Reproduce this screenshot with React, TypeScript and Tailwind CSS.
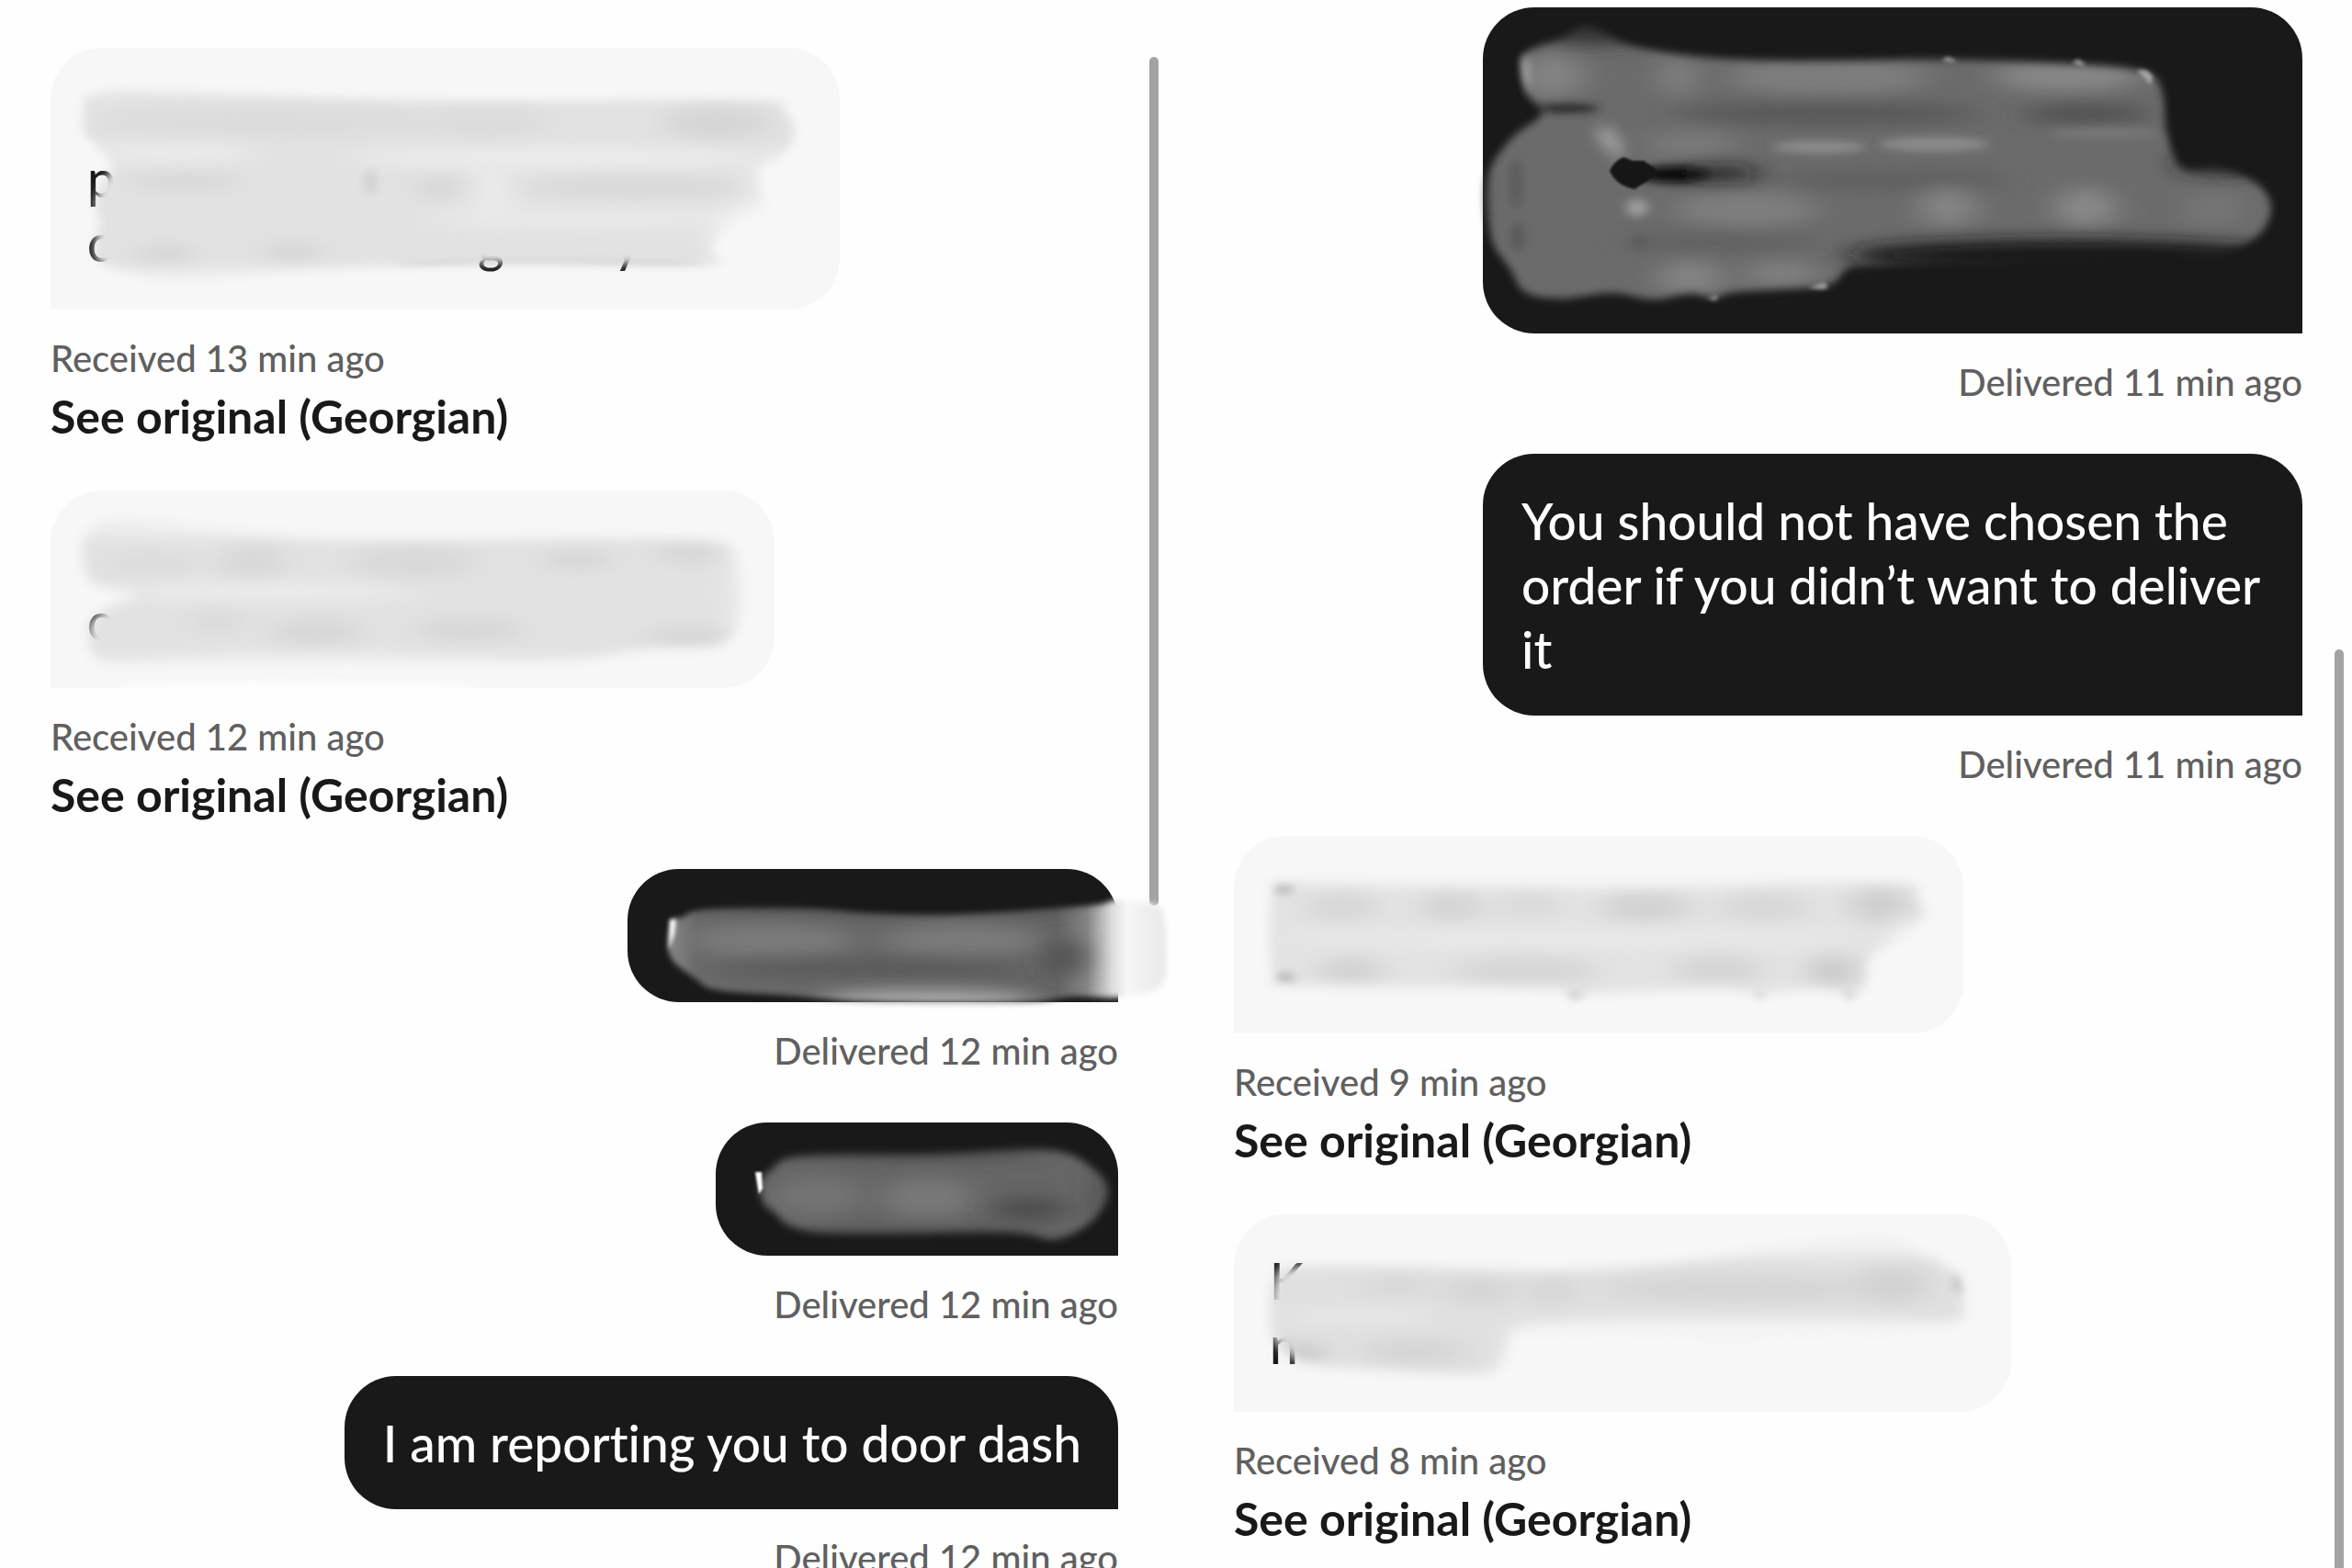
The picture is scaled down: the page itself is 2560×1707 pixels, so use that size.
import { useId, type ReactNode } from "react";

type Point = [number, number];
type Blob = { at: [number, number, number, number]; fill: string; sharp?: boolean };

/* Closed smooth curve through a list of points. */
function smooth(points: Point[]): string {
  const n = points.length;
  const at = (i: number) => points[(i + n) % n];
  let d = `M${at(0)[0]} ${at(0)[1]}`;
  for (let i = 0; i < n; i++) {
    const [p0, p1, p2, p3] = [at(i - 1), at(i), at(i + 1), at(i + 2)];
    d += `C${p1[0] + (p2[0] - p0[0]) / 6} ${p1[1] + (p2[1] - p0[1]) / 6} ${p2[0] - (p3[0] - p1[0]) / 6} ${p2[1] - (p3[1] - p1[1]) / 6} ${p2[0]} ${p2[1]}`;
  }
  return d + "Z";
}

/* A smeared-out patch that hides the words of a message. */
function Smudge({
  box,
  outline,
  fill,
  edge = 4,
  blobs,
  under,
  over,
  stops,
}: {
  box: string;
  outline: Point[];
  fill: string;
  edge?: number;
  blobs: Blob[];
  under?: ReactNode;
  over?: ReactNode;
  stops?: ReactNode;
}) {
  const id = useId();
  const [x, y, w, h] = box.split(" ").map(Number);
  const area = { x: x - 60, y: y - 60, width: w + 120, height: h + 120 };
  return (
    <svg viewBox={box} aria-hidden="true" className="absolute inset-0 size-full overflow-visible">
      <defs>
        <filter id={`${id}e`} filterUnits="userSpaceOnUse" {...area}>
          <feGaussianBlur stdDeviation={edge} />
        </filter>
        <filter id={`${id}s`} filterUnits="userSpaceOnUse" {...area}>
          <feGaussianBlur stdDeviation="6 4" />
        </filter>
        <filter id={`${id}b`} filterUnits="userSpaceOnUse" {...area}>
          <feGaussianBlur stdDeviation="16 9" />
        </filter>
        <mask id={`${id}m`} maskUnits="userSpaceOnUse" {...area}>
          <path d={smooth(outline)} fill="#fff" filter={`url(#${id}e)`} />
        </mask>
        {stops && (
          <linearGradient id={`${id}g`} gradientUnits="userSpaceOnUse" x1="726" x2="1270" y1="0" y2="0">
            {stops}
          </linearGradient>
        )}
      </defs>
      {under}
      <g mask={`url(#${id}m)`}>
        <rect {...area} fill={stops ? `url(#${id}g)` : fill} />
        {blobs.map((b, i) => (
          <ellipse
            key={i}
            cx={b.at[0]}
            cy={b.at[1]}
            rx={b.at[2]}
            ry={b.at[3]}
            fill={b.fill}
            filter={b.sharp ? `url(#${id}s)` : `url(#${id}b)`}
          />
        ))}
      </g>
      {over}
    </svg>
  );
}

function Incoming({ width, height, time, children }: { width: string; height: string; time: string; children: ReactNode }) {
  return (
    <article className="flex flex-col items-start pb-[47px]">
      <div className={`relative max-w-full rounded-[56px] rounded-bl-none bg-[#f7f7f7] ${width} ${height}`}>{children}</div>
      <p className="mt-6 text-[40px] leading-[58px] font-medium text-[#606060]">Received {time} min ago</p>
      <button type="button" className="text-[50px] leading-[68px] font-bold text-[#191919]">
        See original (Georgian)
      </button>
    </article>
  );
}

function Outgoing({ size, time, children }: { size: string; time: string; children: ReactNode }) {
  return (
    <article className="flex flex-col items-end pb-[49px]">
      <div className={`relative max-w-full rounded-[56px] rounded-br-none bg-[#191919] ${size}`}>{children}</div>
      <p className="mt-6 text-[40px] leading-[58px] font-medium text-[#606060]">Delivered {time} min ago</p>
    </article>
  );
}

function Words({ children }: { children: ReactNode }) {
  return <p className="pt-[38px] pr-10 pb-[37px] pl-[42px] text-[55px] leading-[70px] font-medium text-white">{children}</p>;
}

const letter = { fontSize: 55, fontWeight: 500, fill: "#191919" };

export default function App() {
  return (
    <main className="grid h-screen grid-cols-2 overflow-hidden bg-[#fefefe] font-['Lato',sans-serif] [font-variant-ligatures:none]">
      <section aria-label="Earlier messages" className="relative pt-[52px] pr-[63px] pl-[55px]">
        <div className="absolute top-[62px] right-[19px] h-[924px] w-[10px] rounded-full bg-[#a3a3a3]" />
        <Incoming width="w-[859px]" height="h-[285px]" time="13">
          <Smudge
            box="55 52 859 285"
            fill="#e2e2e2"
            edge={5}
            outline={[[95, 106], [147, 98], [351, 104], [522, 108], [816, 108], [854, 121], [865, 145], [850, 170], [827, 185], [829, 200], [830, 227], [790, 252], [776, 272], [772, 288], [571, 286], [433, 290], [327, 296], [212, 304], [147, 300], [108, 285], [104, 262], [108, 243], [104, 222], [111, 200], [122, 180], [106, 160], [91, 143], [92, 117]]}
            blobs={[
              { at: [470, 96, 380, 9], fill: "#f0f0f0" },
              { at: [290, 132, 190, 18], fill: "#dcdcdc" },
              { at: [530, 134, 70, 18], fill: "#dcdcdc" },
              { at: [780, 134, 60, 20], fill: "#d6d6d6" },
              { at: [190, 166, 90, 7], fill: "#efefef" },
              { at: [610, 172, 230, 9], fill: "#efefef" },
              { at: [535, 210, 18, 34], fill: "#ececec" },
              { at: [850, 210, 26, 40], fill: "#f5f5f5" },
              { at: [200, 198, 60, 6], fill: "#d0d0d0" },
              { at: [403, 198, 6, 14], fill: "#cdcdcd", sharp: true },
              { at: [478, 204, 26, 12], fill: "#d5d5d5" },
              { at: [690, 204, 120, 12], fill: "#d8d8d8" },
              { at: [640, 238, 180, 8], fill: "#ebebeb" },
              { at: [815, 262, 34, 40], fill: "#f5f5f5" },
              { at: [180, 278, 30, 10], fill: "#d2d2d2" },
              { at: [318, 274, 32, 8], fill: "#d0d0d0" },
              { at: [260, 304, 200, 9], fill: "#f2f2f2" },
              { at: [600, 290, 170, 6], fill: "#c4c4c4", sharp: true },
            ]}
            under={
              <>
                <text x="95" y="215" {...letter}>p</text>
                <text x="95" y="285" {...letter}>c</text>
                <text x="520" y="285" {...letter}>g</text>
                <text x="668" y="285" {...letter}>y</text>
              </>
            }
          />
        </Incoming>

        <Incoming width="w-[788px]" height="h-[215px]" time="12">
          <Smudge
            box="55 534 788 215"
            fill="#e2e2e2"
            edge={6}
            outline={[[90, 602], [98, 578], [139, 568], [286, 580], [408, 586], [694, 586], [784, 590], [803, 613], [806, 667], [784, 702], [702, 707], [604, 720], [408, 732], [163, 732], [106, 718], [96, 690], [99, 676], [120, 660], [145, 647], [100, 634]]}
            blobs={[
              { at: [320, 574, 270, 11], fill: "#f0f0f0" },
              { at: [275, 612, 36, 20], fill: "#d8d8d8" },
              { at: [450, 612, 70, 20], fill: "#d9d9d9" },
              { at: [165, 614, 50, 14], fill: "#dcdcdc" },
              { at: [630, 610, 40, 7], fill: "#d0d0d0" },
              { at: [750, 602, 36, 10], fill: "#d4d4d4" },
              { at: [290, 644, 170, 5], fill: "#f4f4f4" },
              { at: [235, 677, 30, 10], fill: "#d8d8d8" },
              { at: [345, 688, 50, 14], fill: "#d6d6d6" },
              { at: [510, 686, 60, 12], fill: "#d5d5d5" },
              { at: [750, 694, 50, 8], fill: "#d0d0d0" },
              { at: [810, 645, 10, 60], fill: "#f2f2f2" },
              { at: [340, 732, 290, 16], fill: "#f8f8f8" },
            ]}
            under={<text x="95" y="697" {...letter}>c</text>}
            over={<ellipse cx="325" cy="748" rx="200" ry="6" fill="#fefefe" className="blur-xs" />}
          />
        </Incoming>

        <Outgoing size="w-[534px] h-[145px]" time="12">
          <Smudge
            box="683 946 534 145"
            fill="#707070"
            edge={3}
            outline={[[731, 1003], [742, 999], [769, 990], [879, 989], [952, 994], [1044, 995], [1185, 986], [1215, 980], [1258, 985], [1267, 1000], [1269, 1033], [1267, 1066], [1253, 1079], [1215, 1086], [1166, 1085], [1124, 1091], [1024, 1092], [928, 1090], [860, 1084], [781, 1078], [756, 1065], [729, 1040]]}
            stops={
              <>
                <stop offset="0" stopColor="#8a8a8a" />
                <stop offset="0.06" stopColor="#6a6a6a" />
                <stop offset="0.78" stopColor="#646464" />
                <stop offset="0.84" stopColor="#858585" />
                <stop offset="0.89" stopColor="#dcdcdc" />
                <stop offset="0.92" stopColor="#f6f6f6" />
                <stop offset="1" stopColor="#e8e8e8" />
              </>
            }
            blobs={[
              { at: [960, 988, 220, 6], fill: "#454545" },
              { at: [840, 1024, 90, 18], fill: "#7a7a7a" },
              { at: [1050, 1024, 90, 18], fill: "#7a7a7a" },
              { at: [940, 1054, 170, 7], fill: "#555555" },
              { at: [1160, 1042, 18, 20], fill: "#505050" },
              { at: [1010, 1090, 120, 11], fill: "#b4b4b4" },
            ]}
            over={<path d="M729 1001h7l-2 16-6 18z" fill="#fff" className="blur-[2px]" />}
          />
        </Outgoing>

        <Outgoing size="w-[438px] h-[145px]" time="12">
          <Smudge
            box="779 1222 438 145"
            fill="#666666"
            edge={4}
            outline={[[828, 1287], [840, 1273], [873, 1258], [1013, 1256], [1142, 1252], [1191, 1273], [1206, 1299], [1188, 1330], [1148, 1349], [1093, 1342], [891, 1342], [840, 1318], [829, 1304]]}
            blobs={[
              { at: [990, 1252, 150, 8], fill: "#454545" },
              { at: [990, 1346, 150, 7], fill: "#4a4a4a" },
              { at: [890, 1302, 50, 22], fill: "#737373" },
              { at: [1010, 1304, 50, 22], fill: "#787878" },
              { at: [1120, 1316, 42, 12], fill: "#4c4c4c" },
              { at: [1208, 1300, 10, 44], fill: "#454545" },
            ]}
            over={<path d="M822 1276h7l1 18-4 6z" fill="#fff" className="blur-[1px]" />}
          />
        </Outgoing>

        <Outgoing size="" time="12">
          <Words>I am reporting you to door dash</Words>
        </Outgoing>
      </section>

      <section aria-label="Later messages" className="relative pt-2 pr-[54px] pl-[63px]">
        <div className="absolute top-[707px] right-[9px] -bottom-3 w-[10px] rounded-full bg-[#a3a3a3]" />
        <Outgoing size="w-[892px] h-[355px]" time="11">
          <Smudge
            box="1614 8 892 355"
            fill="#6b6b6b"
            edge={4}
            outline={[[1657, 67], [1666, 54], [1699, 41], [1730, 30], [1780, 50], [1855, 62], [1955, 66], [2117, 65], [2267, 70], [2337, 79], [2354, 103], [2358, 143], [2375, 182], [2417, 182], [2457, 200], [2472, 227], [2457, 257], [2417, 276], [2342, 276], [2205, 282], [2049, 288], [2012, 292], [1986, 311], [1892, 318], [1865, 324], [1840, 320], [1799, 326], [1755, 319], [1699, 325], [1660, 318], [1644, 293], [1622, 257], [1618, 195], [1644, 152], [1678, 124], [1663, 103]]}
            blobs={[
              { at: [1735, 34, 80, 14], fill: "#303030" },
              { at: [1690, 82, 36, 24], fill: "#838383" },
              { at: [1826, 84, 20, 22], fill: "#808080" },
              { at: [1990, 84, 110, 20], fill: "#7e7e7e" },
              { at: [2250, 82, 80, 18], fill: "#868686" },
              { at: [1706, 118, 34, 5], fill: "#262626", sharp: true },
              { at: [1990, 124, 170, 11], fill: "#565656" },
              { at: [2270, 124, 70, 10], fill: "#505050" },
              { at: [1840, 156, 50, 14], fill: "#7a7a7a" },
              { at: [1980, 160, 50, 7], fill: "#8b8b8b", sharp: true },
              { at: [2105, 157, 60, 8], fill: "#8a8a8a", sharp: true },
              { at: [2290, 145, 60, 6], fill: "#787878", sharp: true },
              { at: [2060, 196, 130, 8], fill: "#5c5c5c" },
              { at: [1900, 228, 80, 20], fill: "#7e7e7e" },
              { at: [2120, 226, 32, 22], fill: "#848484" },
              { at: [2270, 226, 34, 22], fill: "#888888" },
              { at: [2410, 228, 36, 22], fill: "#757575" },
              { at: [1820, 190, 40, 9], fill: "#080808", sharp: true },
              { at: [1870, 189, 46, 7], fill: "#181818" },
              { at: [2425, 178, 56, 12], fill: "#222222" },
              { at: [1870, 264, 110, 6], fill: "#5c5c5c" },
              { at: [2250, 278, 240, 17], fill: "#191919" },
              { at: [1782, 226, 12, 10], fill: "#9c9c9c", sharp: true },
              { at: [1840, 302, 36, 18], fill: "#848484" },
              { at: [1940, 298, 42, 14], fill: "#808080" },
              { at: [1785, 264, 7, 8], fill: "#5a5a5a", sharp: true },
              { at: [1650, 200, 6, 28], fill: "#585858", sharp: true },
              { at: [1652, 258, 6, 16], fill: "#555555", sharp: true },
              { at: [1614, 225, 6, 60], fill: "#3a3a3a", sharp: true },
            ]}
            over={
              <>
                <path d="M1732 142l24-2 14 29-12 2z" fill="#a4a4a4" className="blur-sm" />
                <path d="M1752 186q4-10 15-15l10 4 12 0 12 8 4 6-12 8-14 9q-20-4-27-20z" fill="#161616" className="blur-[1px]" />
                <path d="M1657 62l5-2 3 20-1 24q-10-20-7-42z" fill="#a8a8a8" className="blur-xs" />
                <path d="M2114 66q6-8 16 2zM2256 69q6-9 14 3zM2326 77q12-4 17 7l-2 8z" fill="#a8a8a8" className="blur-[2px]" />
                <path d="M1968 313l18-6 4 6-6 2zM1858 325l12-4-2 6z" fill="#a0a0a0" className="blur-[2px]" />
              </>
            }
          />
        </Outgoing>

        <Outgoing size="w-[892px]" time="11">
          <Words>You should not have chosen the order if you didn’t want to deliver it</Words>
        </Outgoing>

        <Incoming width="w-[794px]" height="h-[215px]" time="9">
          <Smudge
            box="1343 909 794 215"
            fill="#e3e3e3"
            edge={6}
            outline={[[1384, 972], [1390, 960], [1445, 959], [1782, 962], [1959, 958], [2076, 961], [2088, 977], [2094, 997], [2065, 1022], [2036, 1040], [2030, 1072], [2012, 1080], [1975, 1076], [1915, 1080], [1862, 1076], [1714, 1081], [1686, 1076], [1406, 1072], [1388, 1064], [1382, 1030]]}
            blobs={[
              { at: [1720, 956, 330, 7], fill: "#f0f0f0" },
              { at: [1396, 966, 12, 7], fill: "#bcbcbc", sharp: true },
              { at: [1460, 986, 40, 17], fill: "#d7d7d7" },
              { at: [1580, 986, 36, 17], fill: "#d4d4d4" },
              { at: [1665, 984, 30, 16], fill: "#d9d9d9" },
              { at: [1790, 987, 50, 17], fill: "#d2d2d2" },
              { at: [1920, 986, 50, 16], fill: "#d7d7d7" },
              { at: [2045, 984, 32, 20], fill: "#cecece" },
              { at: [1710, 1021, 320, 7], fill: "#ebebeb" },
              { at: [1398, 1064, 12, 7], fill: "#bababa", sharp: true },
              { at: [1470, 1056, 36, 16], fill: "#d2d2d2" },
              { at: [1660, 1056, 80, 16], fill: "#d6d6d6" },
              { at: [1870, 1054, 50, 16], fill: "#d4d4d4" },
              { at: [1995, 1056, 28, 18], fill: "#cacaca" },
              { at: [2082, 1022, 20, 18], fill: "#f4f4f4" },
            ]}
            over={<path d="M1704 1078h22l-8 9h-6zM1908 1080h16l-8 7zM2004 1078h16l-6 10z" fill="#cfcfcf" className="blur-xs" />}
          />
        </Incoming>

        <Incoming width="w-[846px]" height="h-[215px]" time="8">
          <Smudge
            box="1343 1321 846 215"
            fill="#e0e0e0"
            edge={6}
            outline={[[1388, 1392], [1402, 1379], [1501, 1377], [1686, 1382], [1814, 1374], [1927, 1358], [2047, 1350], [2098, 1366], [2130, 1387], [2136, 1411], [2122, 1440], [1983, 1448], [1862, 1450], [1670, 1446], [1644, 1457], [1634, 1486], [1600, 1495], [1509, 1491], [1424, 1484], [1396, 1468], [1384, 1450], [1383, 1415]]}
            blobs={[
              { at: [1960, 1354, 190, 12], fill: "#f1f1f1" },
              { at: [1520, 1400, 40, 12], fill: "#d8d8d8" },
              { at: [1610, 1404, 40, 14], fill: "#d4d4d4" },
              { at: [1690, 1404, 30, 16], fill: "#d6d6d6" },
              { at: [1890, 1402, 150, 15], fill: "#d5d5d5" },
              { at: [2060, 1398, 40, 20], fill: "#d1d1d1" },
              { at: [2134, 1394, 6, 14], fill: "#b4b4b4", sharp: true },
              { at: [1480, 1432, 80, 6], fill: "#ebebeb" },
              { at: [1890, 1448, 250, 12], fill: "#f6f6f6" },
              { at: [1418, 1472, 22, 10], fill: "#c2c2c2" },
              { at: [1540, 1470, 60, 14], fill: "#d5d5d5" },
              { at: [1650, 1480, 12, 26], fill: "#f2f2f2" },
            ]}
            under={
              <>
                <text x="1382" y="1414" {...letter}>K</text>
                <text x="1382" y="1484" {...letter}>n</text>
              </>
            }
          />
        </Incoming>
      </section>
    </main>
  );
}
